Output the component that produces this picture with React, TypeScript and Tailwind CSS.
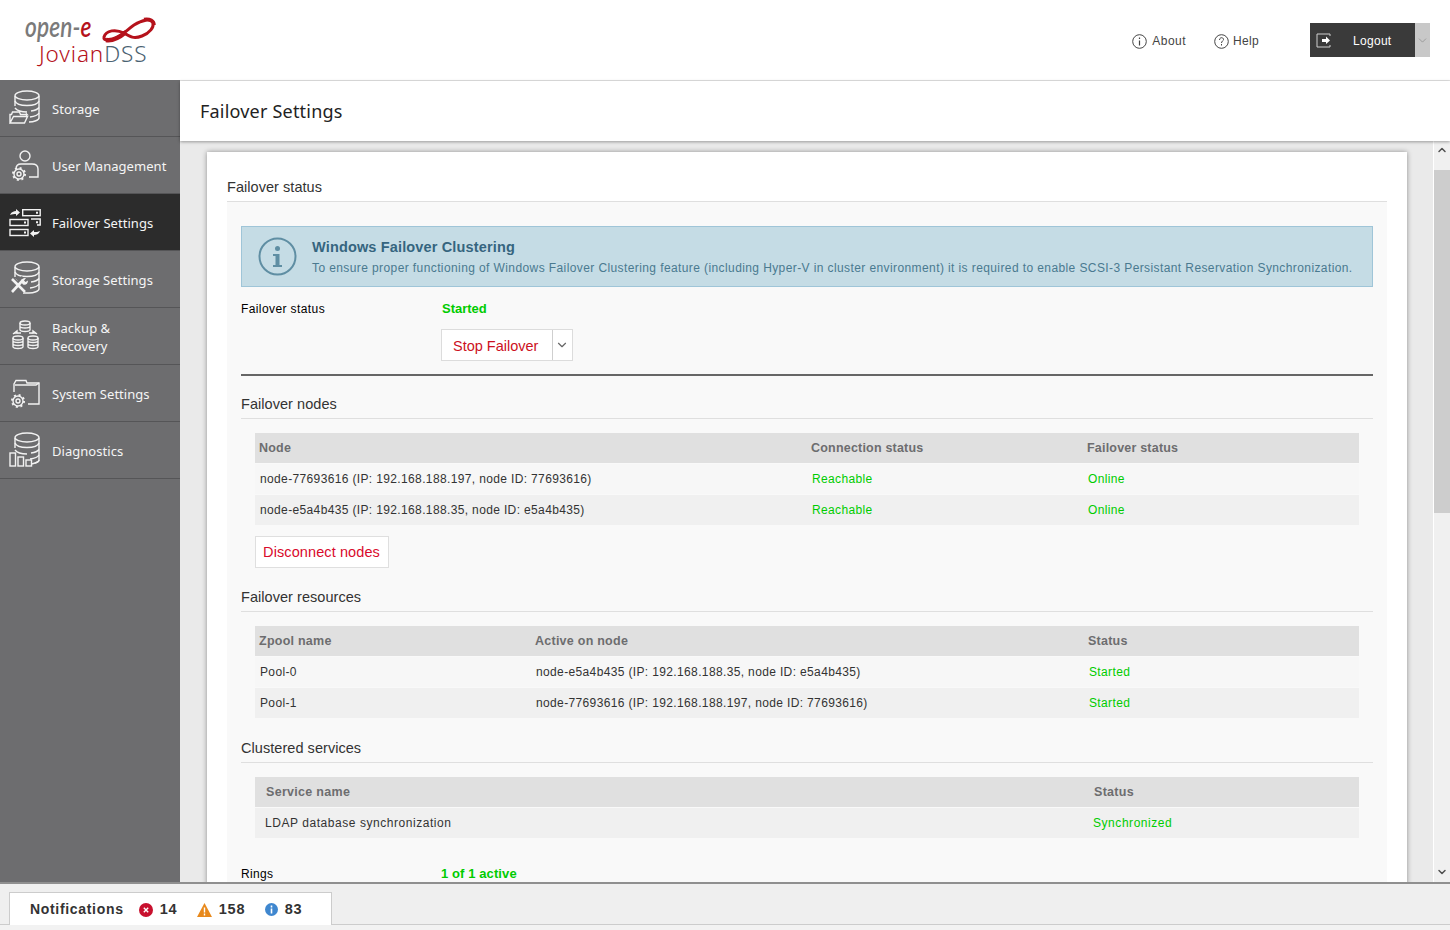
import { ChevronDown, ChevronUp } from 'lucide-react';
import type { ReactNode } from 'react';

const Db = ({ clip }: { clip?: boolean }) => (
  <>
    <ellipse cx="18" cy="5.5" rx="12" ry="4.5" />
    <path d="M6 6v10M30 6v22c0 2-5 4-10 4" />
    <path d="M6 11c2 6 22 6 24 0" />
    <path d="M6 18c3 4 8 4 12 4M22 21c4-.5 7-2 8-3.500" />
    {clip ? null : <path d="M21 27c4-.5 8-2 9-4" />}
  </>
);

const Gear = ({ x, y }: { x: number; y: number }) => (
  <>
    <circle cx={x} cy={y} r="5" />
    <circle cx={x} cy={y} r="2" />
    <circle cx={x} cy={y} r="6" strokeWidth="2" strokeDasharray="2 2.700" />
  </>
);

const iconProps = {
  width: 32,
  height: 36,
  viewBox: '0 0 32 36',
  fill: 'none',
  stroke: '#f2f2f2',
  strokeWidth: 1.4,
};

const StorageIcon = () => (
  <svg {...iconProps}>
    <Db />
    <path d="M1 33V24.500h1.500l1-2.500h7l1 2.500H18l-.5-.5v3M1 33h14.500l3-6.500H4.500L1 33z" fill="#6d6d6f" />
  </svg>
);

const UserIcon = () => (
  <svg {...iconProps}>
    <circle cx="16" cy="9" r="5" />
    <path d="M7 22c0-3 2-5 5-5h11c4 0 6 2 6 5v8h-9" />
    <Gear x={10} y={27} />
  </svg>
);

const FailoverIcon = () => (
  <svg {...iconProps}>
    <rect x="13.700" y="5.700" width="17.500" height="6" />
    <path d="M22 15h9.200v6H28" />
    <rect x="1" y="15.500" width="18" height="6" />
    <rect x="1" y="25.500" width="18" height="6" />
    <path d="M1 11c1-3 4-4 6-4V5l4 3.500L7 12v-2c-2 0-4 0-6 1zM31 27c-1 3-4 4-6 4v2l-4-3.500L25 26v2c2 0 4 0 6-1z" fill="#f2f2f2" stroke="none" />
    <path d="M27 8.700h2M27 18.200h2M15 18.500h2M15 28.500h2" strokeWidth="2" />
  </svg>
);

const StorageSettingsIcon = () => (
  <svg {...iconProps}>
    <Db clip />
    <path d="M21 27c4-.5 8-2 9-4M14 32h6" />
    <path d="M2 17l13 14M15 17L2 31" stroke="#6d6d6f" strokeWidth="6" />
    <path d="M3 18l13 13M14 19L3 31" stroke="#f2f2f2" strokeWidth="2.600" />
    <path d="M12 21c0-3 2-4 5-4l-2 2.500 1.500 1.500 2.500-1.500c0 3-2 5-5 4z" fill="#f2f2f2" stroke="none" />
  </svg>
);

const BackupIcon = () => (
  <svg {...iconProps}>
    <ellipse cx="16" cy="5" rx="5" ry="2" />
    <path d="M11 5v7c1 2 9 2 10 0V5M11 8.500c1 2 9 2 10 0" />
    <path d="M4 16l4-3v2h4M28 16l-4-3v2h-4" fill="#f2f2f2" />
    <ellipse cx="9" cy="20" rx="5" ry="2" />
    <path d="M4 20v9c1 2 9 2 10 0v-9M4 23c1 2 9 2 10 0M4 26c1 2 9 2 10 0" />
    <ellipse cx="24" cy="20" rx="5" ry="2" />
    <path d="M19 20v9c1 2 9 2 10 0v-9M19 23c1 2 9 2 10 0M19 26c1 2 9 2 10 0" />
  </svg>
);

const SystemIcon = () => (
  <svg {...iconProps}>
    <path d="M5 17V9l2-3.500h10l1 2.500h12v21H19" />
    <path d="M6 10h21l3-2" />
    <Gear x={9} y={26} />
  </svg>
);

const DiagnosticsIcon = () => (
  <svg {...iconProps}>
    <Db clip />
    <path d="M21 27c4-.5 8-2 9-4M26 31c2-.5 4-1.500 4-3" />
    <rect x="1" y="21" width="5.500" height="13" fill="#6d6d6f" />
    <rect x="9" y="25" width="5.500" height="9" fill="#6d6d6f" />
    <rect x="17" y="28" width="5.500" height="6" fill="#6d6d6f" />
  </svg>
);

const navItems = [
  { label: <>Storage</>, icon: <StorageIcon /> },
  { label: <>User Management</>, icon: <UserIcon /> },
  { label: <>Failover Settings</>, icon: <FailoverIcon />, active: true },
  { label: <>Storage Settings</>, icon: <StorageSettingsIcon /> },
  { label: <>Backup &amp;<br />Recovery</>, icon: <BackupIcon /> },
  { label: <>System Settings</>, icon: <SystemIcon /> },
  { label: <>Diagnostics</>, icon: <DiagnosticsIcon /> },
];

const Heading = ({ children }: { children: ReactNode }) => (
  <div className="h-[44px] flex items-end pb-[4px] border-b border-[#dfdfdf] text-[#333] text-[14.500px] leading-[20px] tracking-[0.050px]">
    {children}
  </div>
);

interface TableProps {
  cols: string;
  head: string[];
  rows: string[][];
  inset: string;
  headInset: string;
}

const Table = ({ cols, head, rows, inset, headInset }: TableProps) => (
  <div className="mx-[14px] mt-[14px] text-[12px]">
    <div className={`grid h-[30px] mb-px pt-px items-center bg-[#e0e0e0] font-bold text-[#6d6d6f] text-[12.500px] ${cols}`}>
      {head.map((h) => (
        <div key={h} className={headInset}>{h}</div>
      ))}
    </div>
    {rows.map((row, i) => (
      <div key={row[0]} className={`grid h-[30px] mb-px items-center ${i % 2 === 0 && rows.length > 1 ? 'bg-[#f7f7f7]' : 'bg-[#f0f0f0]'} ${cols}`}>
        {row.map((c, j) => (
          <div key={j} className={`${inset} ${c === 'Reachable' || j === row.length - 1 ? 'text-[#00cc00]' : 'text-[#333]'}`}>
            {c}
          </div>
        ))}
      </div>
    ))}
  </div>
);

export default function App() {
  return (
    <div className="w-[1450px] h-[930px] flex flex-col overflow-hidden bg-white font-['Liberation_Sans',sans-serif]">
      <header className="h-[80px] shrink-0 flex items-center justify-between pr-[20px]">
        <div className="relative w-[180px] h-[80px]">
          <span className="absolute left-[25px] top-[9px] text-[29px] leading-[34px] italic font-semibold font-['Lato',sans-serif] text-[#7a7a7a] tracking-[0.200px] scale-x-[0.78] origin-left">
            open-<span className="text-[#b5121b]">e</span>
          </span>
          <svg className="absolute left-[100px] top-[16px]" width="57" height="28" viewBox="0 0 57 28" fill="none" stroke="#b5121b">
            <path d="M4 21C6 14 16 13 24 17 30 21 34 23 42 20 50 17 54 11 53 7 51 2 42 4 34 9 28 13 23 19 16 22 10 25 3 25 4 21Z" strokeWidth="3" />
            <path d="M6 24C12 25 20 21 26 16" strokeWidth="4.500" />
            <path d="M44 3.500C50 2.500 54 5 54 9" strokeWidth="3.500" />
          </svg>
          <span className="absolute left-[39px] top-[40px] text-[22.500px] leading-[28px] font-['Noto_Sans',sans-serif] font-light text-[#b5121b] tracking-[0.900px]">
            Jovian<span className="text-[#4a6272]">DSS</span>
          </span>
        </div>
        <div className="flex items-center text-[12px] text-[#444]">
          <div className="flex items-center gap-[5px] mr-[28px] pt-[2px]">
            <svg width="15" height="15" viewBox="0 0 15 15" fill="none" stroke="#444">
              <circle cx="7.500" cy="7.500" r="6.800" />
              <path d="M7.500 6.500v5" strokeWidth="1.200" />
              <path d="M7.500 3.500v1.500" strokeWidth="1.200" />
            </svg>
            <span className="tracking-[0.500px]">About</span>
          </div>
          <div className="flex items-center gap-[4px] mr-[51px] pt-[2px]">
            <svg width="15" height="15" viewBox="0 0 15 15" fill="none" stroke="#444">
              <circle cx="7.500" cy="7.500" r="6.800" />
              <path d="M5.500 6c0-3 4-3 4-.5 0 1.500-2 1.500-2 3.500M7.500 10v1.500" />
            </svg>
            <span className="tracking-[0.300px]">Help</span>
          </div>
          <div className="flex h-[34px]">
            <div className="w-[105px] bg-[#3a3a3a] flex items-center pl-[6px] text-white">
              <svg width="15" height="15" viewBox="0 0 15 15" fill="none" stroke="#cfcfcf">
                <path d="M14 3V1H1v13h13v-2" />
                <path d="M6 6h4V3.500L14 7.500 10 11V9H6z" fill="#fff" stroke="none" />
              </svg>
              <span className="ml-[22px] pt-[2px] tracking-[0.300px]">Logout</span>
            </div>
            <div className="w-[15px] bg-[#c8c8c8] flex items-center justify-center">
              <ChevronDown size={13} strokeWidth={1} className="text-[#777]" />
            </div>
          </div>
        </div>
      </header>

      <div className="flex-1 min-h-0 flex">
        <nav className="w-[180px] shrink-0 bg-[#6d6d6f] text-[#f5f5f5] text-[13px] leading-[18px] tracking-[0.040px] font-['Noto_Sans',sans-serif]">
          {navItems.map((item, i) => (
            <div key={i} className={`h-[57px] flex items-center border-b border-[#555557] ${item.active ? 'bg-[#2c2c2c]' : ''}`}>
              <div className="w-[52px] pl-[9px] shrink-0 flex">{item.icon}</div>
              <div className="pt-[2px]">{item.label}</div>
            </div>
          ))}
        </nav>

        <main className="flex-1 min-w-0 flex flex-col bg-[#eaeaea] border-t border-[#e3e3e3]">
          <div className="relative z-10 h-[60px] shrink-0 bg-white flex items-center pl-[20px] text-[18px] tracking-[0.200px] text-[#222] font-['Noto_Sans',sans-serif] shadow-[0_1px_3px_rgba(0,0,0,0.35)]">
            Failover Settings
          </div>
          <div className="flex-1 min-h-0 flex overflow-hidden">
            <div className="flex-1 min-w-0 pl-[27px] pr-[26px] pt-[11px]">
              <section className="h-[900px] bg-white px-[20px] shadow-[0_0_5px_rgba(0,0,0,0.4)]">
                <div className="h-[50px] flex items-end pb-[4px] border-b border-[#dfdfdf] text-[14.500px] leading-[20px] tracking-[0.050px] text-[#333]">
                  Failover status
                </div>
                <div className="bg-[#f9f9f9] px-[14px] pt-[24px] h-[840px]">
                  <div className="h-[61px] flex items-center bg-[#c5dce5] border border-[#9fc5d8]">
                    <svg className="ml-[16px] mr-[15px] shrink-0" width="39" height="39" viewBox="0 0 39 39" fill="none" stroke="#5f8ea3">
                      <circle cx="19.500" cy="19.500" r="18" strokeWidth="2" />
                      <circle cx="19.500" cy="11.500" r="2.500" fill="#5f8ea3" stroke="none" />
                      <path d="M15 17h6.500v11H24v2H15v-2h2.500V19H15z" fill="#5f8ea3" stroke="none" />
                    </svg>
                    <div className="pt-[2px]">
                      <div className="text-[14.500px] leading-[20px] font-bold text-[#35657f] tracking-[0.150px]">Windows Failover Clustering</div>
                      <div className="pt-[1px] text-[12px] leading-[20px] text-[#4a7a90] tracking-[0.400px] whitespace-nowrap">
                        To ensure proper functioning of Windows Failover Clustering feature (including Hyper-V in cluster environment) it is required to enable SCSI-3 Persistant Reservation Synchronization.
                      </div>
                    </div>
                  </div>
                  <div className="h-[42px] pt-[2px] flex items-center text-[12px] tracking-[0.400px]">
                    <div className="w-[201px] text-black">Failover status</div>
                    <div className="font-bold text-[#00cc00] text-[13px] tracking-[0px]">Started</div>
                  </div>
                  <div className="ml-[200px] flex h-[32px] w-fit bg-white border border-[#dcdcdc] text-[14.500px] text-[#cc1122]">
                    <div className="w-[111px] flex items-center pl-[11px] pt-[3px] border-r border-[#cfcfcf]">Stop Failover</div>
                    <div className="w-[19px] pr-px flex items-center justify-center">
                      <ChevronDown size={14} className="text-[#666]" />
                    </div>
                  </div>
                  <div className="mt-[13px] h-[2px] bg-[#666]" />
                  <div className="-mt-px">
                    <Heading>Failover nodes</Heading>
                  </div>
                  <Table
                    cols="grid-cols-[552px_276px_1fr]"
                    head={['Node', 'Connection status', 'Failover status']}
                    rows={[
                      ['node-77693616 (IP: 192.168.188.197, node ID: 77693616)', 'Reachable', 'Online'],
                      ['node-e5a4b435 (IP: 192.168.188.35, node ID: e5a4b435)', 'Reachable', 'Online'],
                    ]}
                    inset="pl-[5px] tracking-[0.360px]"
                    headInset="pl-[4px] tracking-[0.200px]"
                  />
                  <div className="ml-[14px] mt-[11px] w-[134px] h-[32px] pt-[2px] pr-px flex items-center justify-center bg-white border border-[#dfdfdf] text-[14.500px] tracking-[0.100px] text-[#d90a2c]">
                    Disconnect nodes
                  </div>
                  <Heading>Failover resources</Heading>
                  <Table
                    cols="grid-cols-[276px_553px_1fr]"
                    head={['Zpool name', 'Active on node', 'Status']}
                    rows={[
                      ['Pool-0', 'node-e5a4b435 (IP: 192.168.188.35, node ID: e5a4b435)', 'Started'],
                      ['Pool-1', 'node-77693616 (IP: 192.168.188.197, node ID: 77693616)', 'Started'],
                    ]}
                    inset="pl-[5px] tracking-[0.360px]"
                    headInset="pl-[4px] tracking-[0.250px]"
                  />
                  <Heading>Clustered services</Heading>
                  <Table
                    cols="grid-cols-[828px_1fr]"
                    head={['Service name', 'Status']}
                    rows={[['LDAP database synchronization', 'Synchronized']]}
                    inset="pl-[10px] tracking-[0.550px]"
                    headInset="pl-[11px] tracking-[0.300px]"
                  />
                  <div className="mt-[21px] h-[30px] flex items-center text-[12px] tracking-[0.300px]">
                    <div className="w-[200px] text-black">Rings</div>
                    <div className="font-bold text-[#00cc00] text-[13px] tracking-[0.100px]">1 of 1 active</div>
                  </div>
                </div>
              </section>
            </div>
            <div className="w-[17px] shrink-0 flex flex-col items-center bg-[#f0f0f0] border-l border-white">
              <div className="h-[29px] pt-[3px] flex items-start justify-center">
                <ChevronUp size={12} strokeWidth={3} className="text-[#505050]" />
              </div>
              <div className="w-full h-[343px] bg-[#cdcdcd]" />
              <div className="flex-1" />
              <div className="h-[19px] pb-[2px] flex items-center justify-center">
                <ChevronDown size={12} strokeWidth={3} className="text-[#505050]" />
              </div>
            </div>
          </div>
        </main>
      </div>

      <footer className="h-[48px] shrink-0 border-t-2 border-[#8f8f8f] bg-[#f2f2f2]">
        <div className="h-[41px] pt-[8px] pl-[9px] bg-[#efefef] border-b border-[#cccccc]">
          <div className="w-[323px] h-[33px] flex items-center pl-[20px] pt-px bg-white border border-b-0 border-[#cccccc] text-[14px] font-bold text-[#333]">
            <span className="mr-[15px] tracking-[0.680px]">Notifications</span>
            <svg className="mr-[7px]" width="14" height="14" viewBox="0 0 14 14">
              <circle cx="7" cy="7" r="7" fill="#c8102e" />
              <path d="M4.800 4.800l4.400 4.400M9.200 4.800l-4.400 4.400" stroke="#fff" strokeWidth="1.400" />
            </svg>
            <span className="w-[37px] text-[14.500px] tracking-[0.900px]">14</span>
            <svg className="mr-[7px]" width="15" height="14" viewBox="0 0 15 14">
              <path d="M7.500 0L15 14H0z" fill="#e8891c" />
              <path d="M7.500 4.500v5M7.500 10.500v2" stroke="#fff" strokeWidth="1.400" />
            </svg>
            <span className="w-[46px] text-[14.500px] tracking-[0.900px]">158</span>
            <svg className="mr-[7px]" width="13" height="13" viewBox="0 0 13 13">
              <circle cx="6.500" cy="6.500" r="6.500" fill="#3f87cf" />
              <path d="M6.500 5.500v5M6.500 2.500v2" stroke="#fff" strokeWidth="1.600" />
            </svg>
            <span className="text-[14.500px] tracking-[0.900px]">83</span>
          </div>
        </div>
      </footer>
    </div>
  );
}
